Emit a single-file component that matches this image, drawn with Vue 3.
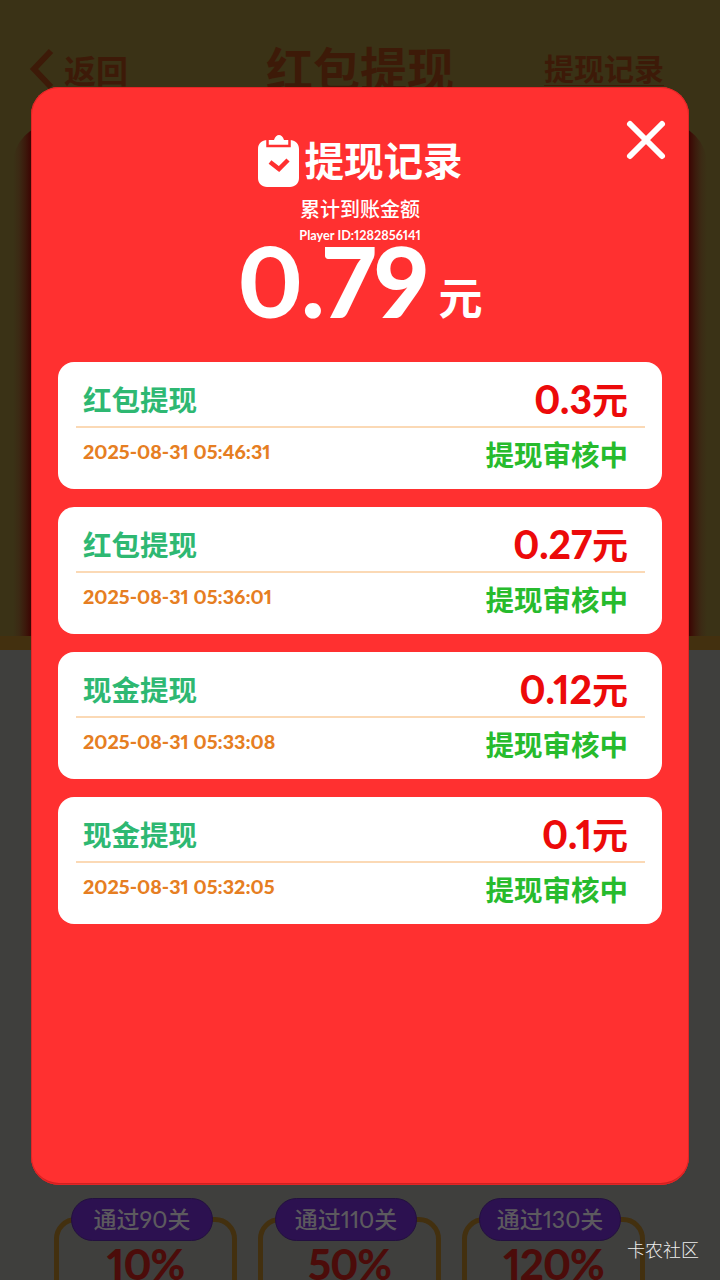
<template>
  <div class="page">
    <header class="topbar">
      <div class="back">
        <svg class="back-arrow" width="26" height="42" viewBox="0 0 26 42">
          <path d="M23 3 L6 21 L23 39" fill="none" stroke="#3d1a08" stroke-width="6" />
        </svg>
        <span>返回</span>
      </div>
      <div class="page-title">红包提现</div>
      <div class="records-link">提现记录</div>
    </header>

    <div class="game-panel"></div>

    <div class="stages">
      <div v-for="stage in stages" :key="stage.label" class="stage">
        <div class="stage-tag">{{ stage.label }}</div>
        <div class="stage-value">{{ stage.value }}</div>
      </div>
    </div>

    <div class="watermark">卡农社区</div>

    <div class="modal">
      <button class="close" aria-label="close">
        <svg width="42" height="42" viewBox="0 0 42 42">
          <path d="M5 5 L37 37 M37 5 L5 37" stroke="#fff" stroke-width="6" stroke-linecap="round" />
        </svg>
      </button>

      <div class="modal-title">
        <svg class="clipboard" width="41" height="52" viewBox="0 0 41 52">
          <path d="M9 5 H16 C17 1.500 19 0 21 0 C23 0 25 1.500 26 5 H32 C37 5 41 8.500 41 14 V43 C41 48.500 37 52 32 52 H9 C4 52 0 48.500 0 43 V14 C0 8.500 4 5 9 5 Z" fill="#fff" />
          <path d="M9.500 5 V11 H31.500 V5" fill="none" stroke="#ff3030" stroke-width="2.500" />
          <path d="M12 27 L21 34 L30 25" fill="none" stroke="#ff3030" stroke-width="4.500" />
        </svg>
        <span>提现记录</span>
      </div>
      <div class="total-label">累计到账金额</div>
      <div class="player-id">Player ID:1282856141</div>
      <div class="total">
        <span class="total-num">0.79</span>
        <span class="total-unit">元</span>
      </div>

      <div class="list">
        <div v-for="item in records" :key="item.time" class="record">
          <div class="record-top">
            <span class="record-name">{{ item.name }}</span>
            <span class="record-amount">{{ item.amount }}<span class="record-unit">元</span></span>
          </div>
          <div class="record-bottom">
            <span class="record-time">{{ item.time }}</span>
            <span class="record-status">提现审核中</span>
          </div>
        </div>
      </div>
    </div>
  </div>
</template>

<script setup>
const records = [
  { name: '红包提现', amount: '0.3', time: '2025-08-31 05:46:31' },
  { name: '红包提现', amount: '0.27', time: '2025-08-31 05:36:01' },
  { name: '现金提现', amount: '0.12', time: '2025-08-31 05:33:08' },
  { name: '现金提现', amount: '0.1', time: '2025-08-31 05:32:05' }
]

const stages = [
  { label: '通过90关', value: '10%' },
  { label: '通过110关', value: '50%' },
  { label: '通过130关', value: '120%' }
]
</script>

<style>
html, body {
  margin: 0;
  background: #3f3f3d;
}
</style>

<style scoped>
.page {
  position: relative;
  width: 720px;
  height: 1280px;
  overflow: hidden;
  background: linear-gradient(#3a3216 0, #3a3216 636px, #43300f 636px, #43300f 650px, #3f3f3d 650px);
  font-family: "Lato", "Noto Sans CJK SC", sans-serif;
  font-variant-numeric: proportional-nums;
}

.topbar {
  height: 130px;
  padding: 46px 28px 0;
  box-sizing: border-box;
  display: grid;
  grid-template-columns: 1fr auto 1fr;
  align-items: start;
  color: #3d1a08;
  font-weight: 700;
}

.back {
  display: flex;
  align-items: center;
  gap: 10px;
  font-size: 32px;
}

.page-title {
  font-size: 47px;
  line-height: 46px;
}

.records-link {
  justify-self: end;
  margin-right: 28px;
  margin-top: 5px;
  font-size: 30px;
  line-height: 34px;
  border-bottom: 1px solid #3d1a08;
}

.game-panel {
  position: absolute;
  left: 13px;
  right: 13px;
  top: 124px;
  height: 512px;
  border-radius: 40px 40px 0 0;
  background: linear-gradient(90deg, #3a3216 0, #3b2a14 6px, #3c1a0c 12px, #3c0503 18px, #3c0503 676px, #3c1a0c 682px, #3b2a14 688px, #3a3216 694px);
}

.stages {
  position: absolute;
  left: 54px;
  top: 1217px;
  display: flex;
  gap: 21px;
}

.stage {
  position: relative;
  width: 183px;
  height: 120px;
  box-sizing: border-box;
  border: 5px solid #43300f;
  border-radius: 22px;
  display: flex;
  justify-content: center;
}

.stage-tag {
  position: absolute;
  top: -24px;
  left: 12px;
  width: 142px;
  height: 43px;
  box-sizing: border-box;
  border: 1px solid #23103f;
  border-radius: 22px;
  background: #2c1150;
  color: #5c5a5e;
  font-size: 23px;
  font-weight: 500;
  line-height: 41px;
  text-align: center;
}

.stage-value {
  margin-top: 19px;
  color: #4c0c0a;
  font-size: 42px;
  font-weight: 900;
  line-height: 46px;
  letter-spacing: -1px;
}

.watermark {
  position: absolute;
  right: 21px;
  top: 1240px;
  color: #eeeeee;
  font-size: 18px;
  font-weight: 300;
  line-height: 20px;
}

.modal {
  position: absolute;
  left: 31px;
  top: 87px;
  width: 658px;
  height: 1098px;
  box-sizing: border-box;
  padding-top: 48px;
  background: #ff3030;
  border-radius: 28px;
  box-shadow: inset 0 0 0 1px #e02626, inset 0 -2px 0 #d02020;
}

.close {
  position: absolute;
  right: 22px;
  top: 32px;
  padding: 0;
  border: 0;
  background: none;
  display: flex;
}

.modal-title {
  display: flex;
  justify-content: center;
  align-items: center;
  gap: 6px;
  height: 52px;
  color: #fff;
  font-size: 39.500px;
  font-weight: 700;
}

.modal-title span {
  padding-bottom: 5px;
}

.total-label {
  margin-top: 9px;
  text-align: center;
  color: #fff;
  font-size: 20px;
  font-weight: 500;
  line-height: 26px;
}

.player-id {
  margin-top: 6px;
  text-align: center;
  color: #fff;
  font-size: 12.700px;
  font-weight: 700;
  line-height: 14px;
}

.total {
  display: flex;
  justify-content: center;
  align-items: flex-end;
  gap: 11px;
  height: 76px;
  color: #fff;
}

.total-num {
  font-size: 98px;
  font-weight: 900;
  line-height: 76px;
  letter-spacing: -1.500px;
}

.total-unit {
  margin-bottom: -5px;
  font-size: 44px;
  font-weight: 700;
  line-height: 50px;
}

.list {
  margin: 44px 27px 0;
  display: flex;
  flex-direction: column;
  gap: 18px;
}

.record {
  height: 127px;
  box-sizing: border-box;
  padding: 0 17px 0 18px;
  background: #fff;
  border-radius: 16px;
}

.record-top,
.record-bottom {
  display: flex;
  justify-content: space-between;
  align-items: center;
  padding: 0 17px 0 7px;
}

.record-top {
  height: 66px;
  padding-top: 8px;
  border-bottom: 2px solid #fbd9b5;
  box-sizing: border-box;
}

.record-bottom {
  height: 50px;
}

.record-name {
  color: #2eb872;
  font-size: 28.500px;
  font-weight: 700;
}

.record-amount {
  color: #ec0a0a;
  font-size: 39px;
  font-weight: 900;
}

.record-unit {
  font-size: 36px;
  font-weight: 700;
}

.record-time {
  margin-bottom: 3px;
  color: #e67e22;
  font-size: 19.700px;
  font-weight: 900;
}

.record-status {
  color: #27bb2d;
  font-size: 28.500px;
  font-weight: 700;
}
</style>
